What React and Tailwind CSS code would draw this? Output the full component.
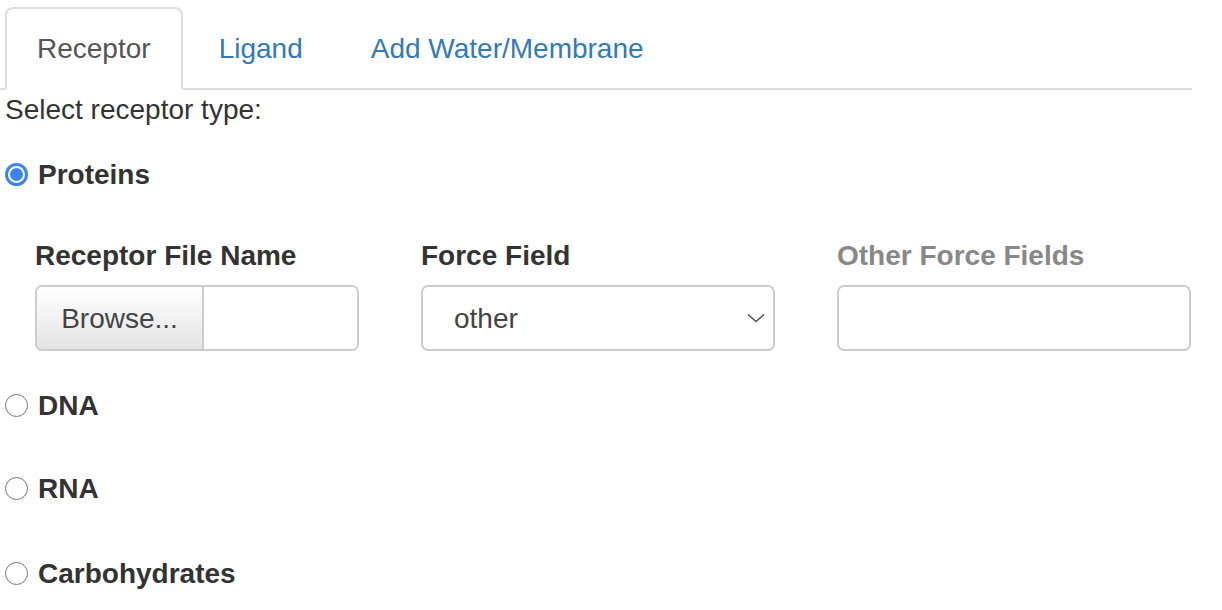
import React, { useState } from 'react';

const font = { fontFamily: '"Liberation Sans", Arial, sans-serif' };

const Radio = ({ checked, label, onClick }) => (
    <div className="flex items-center h-[37px] cursor-pointer" onClick={onClick}>
        <div className="ml-[5px] w-[23px] h-[23px] flex items-center justify-center">
            {checked ? (
                <span className="w-[23px] h-[23px] rounded-full bg-[#3b82f6] flex items-center justify-center">
                    <span className="w-[17px] h-[17px] rounded-full bg-white flex items-center justify-center">
                        <span className="w-[13px] h-[13px] rounded-full bg-[#3b82f6]"></span>
                    </span>
                </span>
            ) : (
                <span className="w-[23px] h-[23px] rounded-full border-[1.5px] border-[#767676] bg-white"></span>
            )}
        </div>
        <span className="ml-[10px] font-bold text-[#333]">{label}</span>
    </div>
);

const App = () => {
    const [type, setType] = useState('proteins');
    const [tab, setTab] = useState('receptor');

    const tabs = [
        { id: 'receptor', name: 'Receptor' },
        { id: 'ligand', name: 'Ligand' },
        { id: 'water', name: 'Add Water/Membrane' },
    ];

    return (
        <div className="w-[1222px] h-[610px] bg-white text-[#333] text-[28px] leading-[37px] overflow-hidden" style={font}>
            {/* tabs */}
            <ul className="flex w-[1192px] pt-[7px] border-b-2 border-[#ddd]">
                {tabs.map((t, i) => (
                    <li key={t.id} className={`-mb-[2px] mr-[4px] ${i === 0 ? 'ml-[5px]' : ''}`}>
                        <button
                            onClick={() => setTab(t.id)}
                            className={`h-[83px] px-[30px] flex items-center rounded-t-[8px] border-2 ${
                                tab === t.id
                                    ? 'border-[#ddd] border-b-white bg-white text-[#555]'
                                    : 'border-transparent text-[#337ab7]'
                            }`}
                        >
                            {t.name}
                        </button>
                    </li>
                ))}
            </ul>

            <div className="ml-[5px] mt-[1px]">Select receptor type:</div>

            <div className="mt-[28px]">
                <Radio checked={type === 'proteins'} label="Proteins" onClick={() => setType('proteins')} />
            </div>

            {/* protein options */}
            <div className="flex gap-[62px] pl-[35px] mt-[44px]">
                <div className="w-[324px]">
                    <label className="block font-bold">Receptor File Name</label>
                    <div className="mt-[11px] flex h-[66px] border-2 border-[#ccc] rounded-[7px] overflow-hidden">
                        <div className="w-[167px] flex items-center justify-center border-r-2 border-[#ccc] bg-gradient-to-b from-white to-[#e4e4e4] text-[#444]">
                            Browse...
                        </div>
                        <div className="flex-1 bg-white"></div>
                    </div>
                </div>
                <div className="w-[354px]">
                    <label className="block font-bold">Force Field</label>
                    <div className="mt-[11px] flex items-center justify-between h-[66px] border-2 border-[#ccc] rounded-[7px] pl-[31px] pr-[8px]">
                        <span className="text-[#444]">other</span>
                        <svg width="18" height="10" viewBox="0 0 18 10" fill="none">
                            <path d="M1 1.5 L9 8.5 L17 1.5" stroke="#555" strokeWidth="1.6" />
                        </svg>
                    </div>
                </div>
                <div className="w-[354px]">
                    <label className="block font-bold text-[#888]">Other Force Fields</label>
                    <div className="mt-[11px] h-[66px] border-2 border-[#ccc] rounded-[7px] bg-white"></div>
                </div>
            </div>

            <div className="mt-[36px]">
                <Radio checked={type === 'dna'} label="DNA" onClick={() => setType('dna')} />
            </div>
            <div className="mt-[46px]">
                <Radio checked={type === 'rna'} label="RNA" onClick={() => setType('rna')} />
            </div>
            <div className="mt-[48px]">
                <Radio checked={type === 'carbs'} label="Carbohydrates" onClick={() => setType('carbs')} />
            </div>
        </div>
    );
};

export default App;
